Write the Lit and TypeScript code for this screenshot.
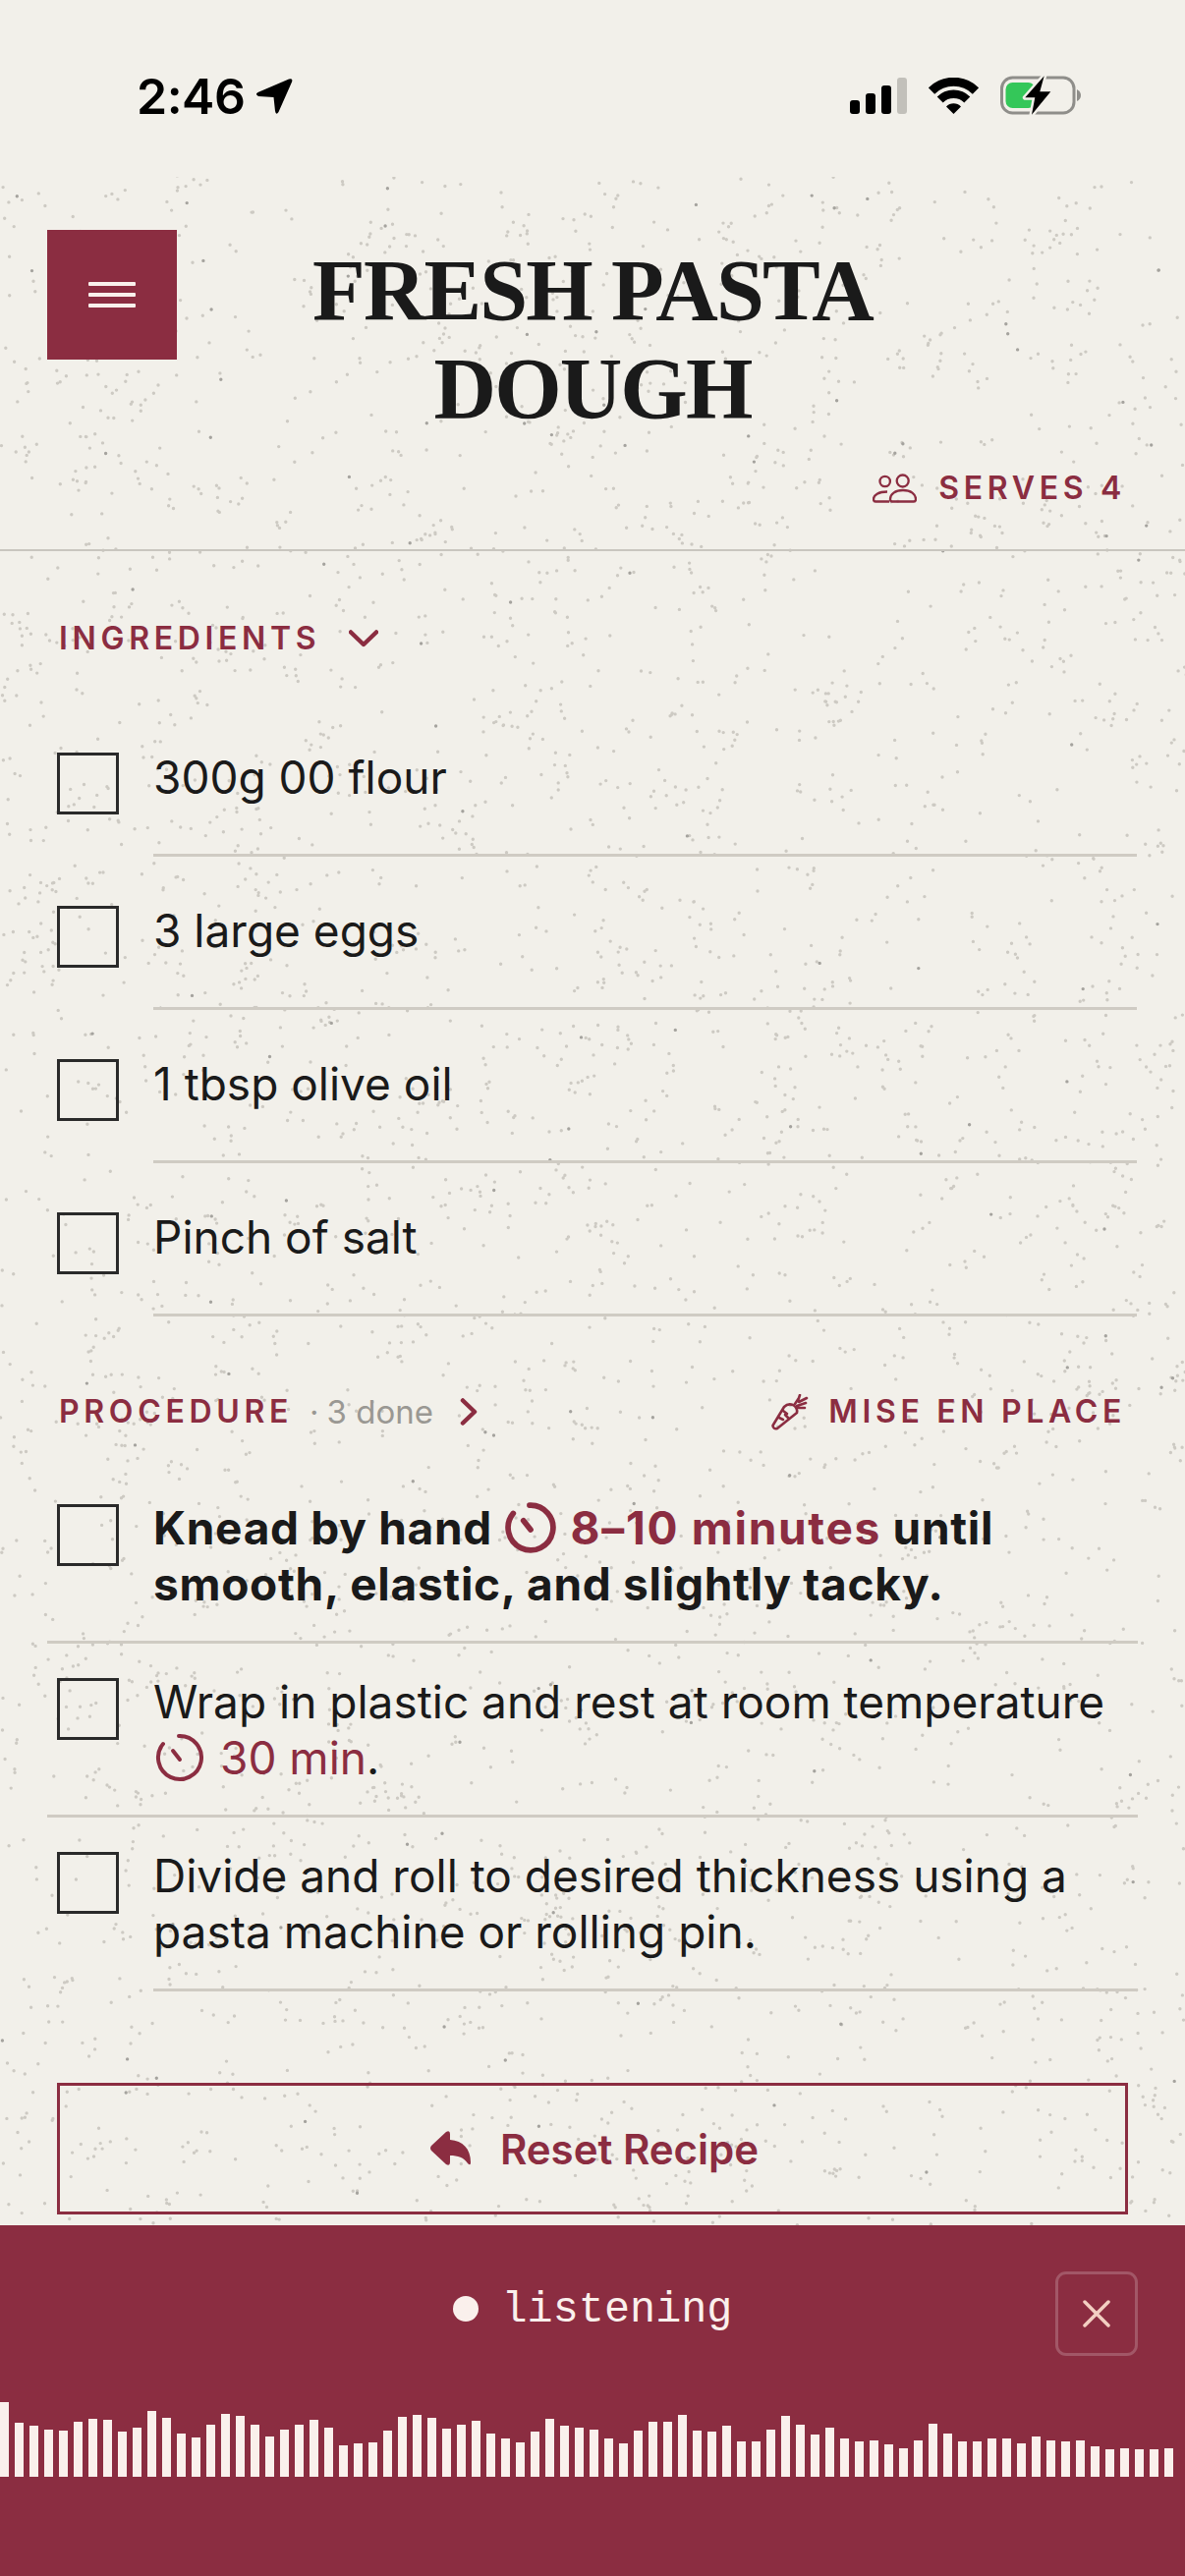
import { LitElement, html, css } from "lit";
import { customElement } from "lit/decorators.js";

const BAR_HEIGHTS = [
  76, 55, 52, 48, 47, 56, 59, 58, 46, 50, 67, 60, 44, 40, 53, 64, 62, 53, 41, 48,
  53, 58, 50, 32, 34, 35, 47, 61, 63, 60, 49, 53, 57, 44, 39, 35, 46, 59, 52, 50,
  48, 39, 34, 47, 56, 56, 63, 47, 46, 52, 36, 36, 48, 62, 53, 43, 50, 39, 36, 37,
  33, 29, 37, 54, 44, 36, 36, 39, 39, 34, 41, 37, 36, 37, 31, 28, 29, 28, 28, 29,
];

const INGREDIENTS = ["300g 00 flour", "3 large eggs", "1 tbsp olive oil", "Pinch of salt"];

// seeded so the grain stays put between runs
function buildSpeckles(width: number, height: number, count: number) {
  let seed = 20240611;
  const rand = () => {
    seed = (seed + 0x6d2b79f5) | 0;
    let t = Math.imul(seed ^ (seed >>> 15), 1 | seed);
    t = (t + Math.imul(t ^ (t >>> 7), 61 | t)) ^ t;
    return ((t ^ (t >>> 14)) >>> 0) / 4294967296;
  };
  let light = "";
  let dark = "";
  let x = 0;
  let y = 0;
  for (let i = 0; i < count; i++) {
    if (rand() < 0.3) {
      x += (rand() - 0.5) * 34;
      y += (rand() - 0.5) * 34;
    } else {
      x = rand() * width;
      y = rand() * height;
    }
    const dot = `M${x.toFixed(1)} ${y.toFixed(1)}h0`;
    if (rand() < 0.025) dark += dot;
    else light += dot;
  }
  return { light, dark };
}

const SPECKLES = buildSpeckles(1206, 2085, 4300);

const timerIcon = (cls: string) => html`<svg class="timer ${cls}" viewBox="0 0 50 50">
  <path d="M24 3A22 22 0 1 1 8 11" fill="none" stroke="currentColor" stroke-linecap="round" />
  <path d="M18 18L25 27" fill="none" stroke="currentColor" stroke-linecap="round" />
</svg>`;

@customElement("app-root")
class AppRoot extends LitElement {
  static styles = css`
    :host {
      --red: #8b2d41;
      --ink: #1a1a1a;
      --rule: #cfcbc3;
      --paper: #f2f0ea;
      display: block;
      width: 1206px;
      height: 2622px;
      overflow: hidden;
      background: var(--paper);
      color: var(--ink);
      font-family: Inter, "Liberation Sans", sans-serif;
    }

    * {
      box-sizing: border-box;
    }

    /* status bar */
    .status {
      height: 180px;
      padding: 79px 106px 0 139px;
      display: flex;
      justify-content: space-between;
      align-items: flex-start;
    }
    .status-left {
      display: flex;
      gap: 11px;
      align-items: center;
      height: 38px;
    }
    .time {
      font-size: 50px;
      line-height: 38px;
      font-weight: 600;
      color: #000;
      letter-spacing: -0.5px;
    }
    .status-right {
      display: flex;
      align-items: flex-start;
      gap: 22px;
    }
    .signal {
      display: flex;
      align-items: flex-end;
      gap: 6px;
      height: 37px;
    }
    .signal i {
      display: block;
      width: 10px;
      background: #000;
      border-radius: 3px;
    }
    .signal i.off {
      background: #c2c0ba;
    }

    /* page body */
    main {
      position: relative;
      height: 2085px;
    }
    .grain {
      position: absolute;
      inset: 0;
      width: 100%;
      height: 100%;
    }
    .content {
      position: relative;
    }

    header {
      border-bottom: 2px solid #c9c6bf;
      padding: 54px 60px 42px 48px;
    }
    .top {
      display: grid;
      grid-template-columns: 132px 1fr 132px;
      margin-right: -12px;
    }
    .menu {
      width: 132px;
      height: 132px;
      background: var(--red);
      display: flex;
      flex-direction: column;
      justify-content: center;
      align-items: center;
      gap: 6.5px;
    }
    .menu i {
      display: block;
      width: 48px;
      height: 4.5px;
      border-radius: 1px;
      background: #faf0ec;
    }
    h1 {
      margin: 12px 0 0;
      text-align: center;
      font-family: "Liberation Serif", serif;
      font-weight: 700;
      font-size: 88px;
      line-height: 100px;
      letter-spacing: -1.9px;
    }
    .serves {
      margin-top: 31px;
      display: flex;
      justify-content: flex-end;
      align-items: center;
      gap: 22px;
    }

    .label {
      font-size: 32px;
      line-height: 40px;
      font-weight: 600;
      letter-spacing: 0.146em;
      color: var(--red);
      white-space: nowrap;
    }

    .ingredients-head {
      margin: 69px 0 46px 60px;
      display: flex;
      align-items: center;
      gap: 29px;
    }

    .box {
      flex: none;
      width: 63px;
      height: 63px;
      border: 3px solid #2a2a2a;
    }

    .ingredient {
      display: flex;
      gap: 35px;
      padding: 0 49px 0 58px;
    }
    .ingredient .box {
      margin-top: 50px;
    }
    .ingredient .text {
      flex: 1;
      height: 156px;
      padding-top: 47px;
      border-bottom: 3px solid var(--rule);
    }

    .text {
      font-size: 46px;
      line-height: 57px;
    }
    .done {
      font-weight: 700;
      letter-spacing: 0.7px;
    }
    .done .accent {
      letter-spacing: 1.7px;
    }
    .accent {
      color: var(--red);
    }
    .timer {
      width: 52px;
      height: 52px;
      vertical-align: -9px;
      margin: 0 15px 0 1px;
    }
    .timer.bold {
      stroke-width: 5.5px;
    }
    .timer.thin {
      stroke-width: 4px;
      width: 50px;
      height: 50px;
      vertical-align: -8px;
      margin-left: 2px;
      margin-right: 16px;
    }

    .procedure-head {
      margin-top: 77px;
      padding: 0 60px;
      display: flex;
      justify-content: space-between;
      align-items: center;
    }
    .procedure-left {
      display: flex;
      align-items: center;
    }
    .count {
      font-size: 33px;
      line-height: 40px;
      color: #9a9893;
      margin-left: 17px;
    }
    .count::before {
      content: "·";
      margin-right: 8px;
    }
    .procedure-left svg {
      margin-left: 27px;
    }
    .mise {
      display: flex;
      align-items: center;
      gap: 20px;
    }

    .steps {
      margin-top: 39px;
    }
    .step {
      display: flex;
      gap: 35px;
      margin: 0 48px;
      padding: 0 0 0 10px;
      height: 177px;
    }
    .step.ruled {
      border-bottom: 3px solid var(--rule);
    }
    .step .box {
      margin-top: 35px;
    }
    .step .text {
      flex: 1;
      padding-top: 31px;
    }
    .step.last .text {
      border-bottom: 3px solid var(--rule);
    }

    .reset {
      margin: 93px 58px 0;
      height: 134px;
      padding-left: 4px;
      border: 3px solid var(--red);
      display: flex;
      align-items: center;
      justify-content: center;
      gap: 29px;
      font-size: 42px;
      font-weight: 600;
      color: var(--red);
    }

    /* listening panel */
    .panel {
      height: 357px;
      background: var(--red);
      padding-top: 47px;
    }
    .panel-top {
      display: grid;
      grid-template-columns: 84px 1fr 84px;
      margin: 0 48px;
    }
    .listening {
      grid-column: 2;
      display: flex;
      justify-content: center;
      align-items: center;
      gap: 24px;
      height: 76px;
      color: #faf0ec;
      font-family: "Liberation Mono", monospace;
      font-size: 43.5px;
    }
    .listening span {
      padding-top: 2px;
    }
    .listening i {
      display: block;
      width: 26px;
      height: 26px;
      border-radius: 50%;
      background: #faf0ec;
    }
    .close {
      width: 84px;
      height: 86px;
      border: 3px solid rgba(255, 255, 255, 0.2);
      border-radius: 11px;
      display: flex;
      align-items: center;
      justify-content: center;
    }
    .bars {
      margin-top: 47px;
      height: 76px;
      display: flex;
      align-items: flex-end;
      gap: 6px;
    }
    .bars i {
      display: block;
      flex: none;
      width: 9px;
      background: #faf0ec;
    }
  `;

  private renderStatus() {
    return html`<div class="status">
      <div class="status-left">
        <span class="time">2:46</span>
        <svg width="38" height="38" viewBox="0 0 38 38">
          <path d="M34 1.5Q38.5 0 37 4.500L23.500 35Q21 39 20 34L18.500 20L3 19Q-1 17 2.500 15Z" fill="#000" />
        </svg>
      </div>
      <div class="status-right">
        <div class="signal">
          <i style="height:14px"></i><i style="height:21px"></i><i style="height:29px"></i>
          <i class="off" style="height:37px"></i>
        </div>
        <svg width="51" height="37" viewBox="0 0 51 37">
          <path d="M3 13.500A32 32 0 0 1 48 13.500" fill="none" stroke="#000" stroke-width="9" />
          <path d="M11.700 22.500A19.500 19.500 0 0 1 39.300 22.500" fill="none" stroke="#000" stroke-width="8.500" />
          <path d="M18 29.500A10.500 10.500 0 0 1 33 29.500L25.500 37Z" fill="#000" />
        </svg>
        <svg width="82" height="40" viewBox="0 0 82 40" style="margin-top:-2px">
          <rect x="1.500" y="2" width="73.500" height="36" rx="11" fill="none" stroke="#8f8e8a" stroke-width="3" />
          <path d="M78 14Q82 16 82 20Q82 24 78 26Z" fill="#8f8e8a" />
          <rect x="5.500" y="7" width="30" height="26" rx="7" fill="#34c759" />
          <path
            d="M44.700 .3L25.300 22.300H35.300L32 39.700L51.300 16.300H40.300Z"
            fill="#000"
            stroke="#f2f0ea"
            stroke-width="5"
            paint-order="stroke"
            stroke-linejoin="round"
          />
        </svg>
      </div>
    </div>`;
  }

  private renderHeader() {
    return html`<header>
      <div class="top">
        <div class="menu"><i></i><i></i><i></i></div>
        <h1>FRESH PASTA<br />DOUGH</h1>
      </div>
      <div class="serves">
        <svg width="45" height="30" viewBox="0 0 45 30" fill="none" stroke="#8b2d41" stroke-width="2.300">
          <circle cx="30.700" cy="7.500" r="6" />
          <circle cx="12.700" cy="8" r="5.200" />
          <path d="M18 26C18 21 23 17 31 17C39 17 44 21 44 26Q44 28.500 42 28.500H20Q18 28.500 18 26Z" />
          <path d="M15 18.500C6 18.500 1 22 1 26Q1 28.500 3 28.500H17" />
        </svg>
        <span class="label">SERVES 4</span>
      </div>
    </header>`;
  }

  private renderSteps() {
    return html`<div class="steps">
      <div class="step ruled">
        <div class="box"></div>
        <div class="text done">
          Knead by hand ${timerIcon("bold accent")}<span class="accent">8–10 minutes</span> until smooth, elastic,
          and slightly tacky.
        </div>
      </div>
      <div class="step ruled">
        <div class="box"></div>
        <div class="text">
          Wrap in plastic and rest at room temperature ${timerIcon("thin accent")}<span class="accent">30 min</span>.
        </div>
      </div>
      <div class="step last">
        <div class="box"></div>
        <div class="text">Divide and roll to desired thickness using a pasta machine or rolling pin.</div>
      </div>
    </div>`;
  }

  render() {
    return html`
      ${this.renderStatus()}
      <main>
        <svg class="grain" viewBox="0 0 1206 2085" aria-hidden="true">
          <path d=${SPECKLES.light} stroke="#cdcac3" stroke-width="3.400" stroke-linecap="round" fill="none" />
          <path d=${SPECKLES.dark} stroke="#a5a39e" stroke-width="3.400" stroke-linecap="round" fill="none" />
        </svg>
        <div class="content">
          ${this.renderHeader()}
          <div class="ingredients-head">
            <span class="label">INGREDIENTS</span>
            <svg width="30" height="18" viewBox="0 0 30 18">
              <path d="M2 2.500L15 15L28 2.500" fill="none" stroke="#8b2d41" stroke-width="4.500" stroke-linecap="round" stroke-linejoin="round" />
            </svg>
          </div>
          ${INGREDIENTS.map(
            item => html`<div class="ingredient">
              <div class="box"></div>
              <div class="text">${item}</div>
            </div>`
          )}
          <div class="procedure-head">
            <div class="procedure-left">
              <span class="label">PROCEDURE</span>
              <span class="count">3 done</span>
              <svg width="18" height="28" viewBox="0 0 18 28">
                <path d="M3 2.500L15 14L3 25.500" fill="none" stroke="#8b2d41" stroke-width="4.500" stroke-linecap="round" stroke-linejoin="round" />
              </svg>
            </div>
            <div class="mise">
              <svg width="38" height="37" viewBox="0 0 38 37" fill="none" stroke="#8b2d41" stroke-width="2.600" stroke-linecap="round" stroke-linejoin="round">
                <path d="M1.500 32L13 13Q17 9 22 11Q27 14 26 19L6 35Q2 36 1.500 32Z" />
                <path d="M24 10L28 4M26 12L35 9M27 7L29 1M28 8L36 4M27 14L34 14" />
                <path d="M12 17L16 20M8 24L12 26M17 24L14 21" />
              </svg>
              <span class="label">MISE EN PLACE</span>
            </div>
          </div>
          ${this.renderSteps()}
          <div class="reset">
            <svg width="42" height="36" viewBox="0 0 42 36">
              <path d="M1 15L16 1Q20 -1 20 3V9C33 10 41 18 41 32Q41 36 38 33C34 27 28 25 20 25V32Q20 36 16 34L1 20Q-1 17.500 1 15Z" fill="#8b2d41" />
            </svg>
            <span>Reset Recipe</span>
          </div>
        </div>
      </main>
      <div class="panel">
        <div class="panel-top">
          <div class="listening"><i></i><span>listening</span></div>
          <div class="close">
            <svg width="28" height="28" viewBox="0 0 28 28">
              <path d="M2 2L26 26M26 2L2 26" stroke="#f3cfc2" stroke-width="3.500" stroke-linecap="round" />
            </svg>
          </div>
        </div>
        <div class="bars">${BAR_HEIGHTS.map(h => html`<i style="height:${h}px"></i>`)}</div>
      </div>
    `;
  }
}

export { AppRoot };
